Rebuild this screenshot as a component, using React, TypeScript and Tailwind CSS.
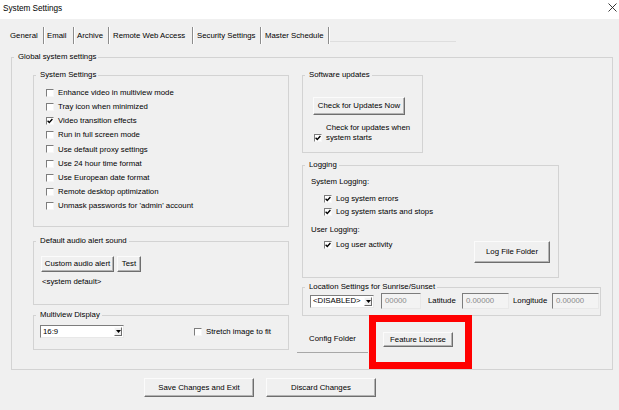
import React from "react";

const Check = ({ checked }: { checked?: boolean }) => (
  <span className="flex h-[8px] w-[8px] shrink-0 items-center justify-center border border-t-[#7d7d7d] border-l-[#7d7d7d] border-r-[#f7f7f7] border-b-[#f7f7f7] bg-white">
    {checked && (
      <svg width="6" height="6" viewBox="0 0 6 6">
        <path d="M0.6 2.7 L2.3 4.4 L5.4 1.1" fill="none" stroke="#000" strokeWidth="1.4" />
      </svg>
    )}
  </span>
);

const Group = ({
  title,
  className,
  children,
}: {
  title: string;
  className: string;
  children?: React.ReactNode;
}) => (
  <fieldset className={`border border-[#d3d3d3] ${className}`}>
    <legend className="ml-[2px] pl-[4px] pr-[2px] leading-[10px]">{title}</legend>
    {children}
  </fieldset>
);

const Btn = ({ label, className }: { label: string; className: string }) => (
  <div
    className={`flex items-center justify-center border border-t-[#fbfbfb] border-l-[#fbfbfb] border-r-[#6e6e6e] border-b-[#6e6e6e] bg-[#f0f0f0] leading-none shadow-[inset_-1px_-1px_0_#b4b4b4] ${className}`}
  >
    {label}
  </div>
);

const CheckRow = ({ label, checked, className }: { label: string; checked?: boolean; className: string }) => (
  <div className={`flex items-center ${className}`}>
    <Check checked={checked} />
    <span className="leading-none">{label}</span>
  </div>
);

const Combo = ({ value, className }: { value: string; className: string }) => (
  <div className={`flex items-center border border-t-[#7d7d7d] border-l-[#7d7d7d] border-r-[#e8e8e8] border-b-[#e8e8e8] bg-white ${className}`}>
    <span className="flex-1 pl-[2px] leading-none">{value}</span>
    <span className="mr-[1px] flex h-[9px] w-[8px] items-center justify-center border border-t-[#fbfbfb] border-l-[#fbfbfb] border-r-[#6e6e6e] border-b-[#6e6e6e] bg-[#f0f0f0]">
      <svg width="5" height="3" viewBox="0 0 5 3">
        <path d="M0 0 H5 L2.5 3 Z" fill="#000" />
      </svg>
    </span>
  </div>
);

const Field = ({ value, className }: { value: string; className: string }) => (
  <div className={`flex items-center border border-t-[#7d7d7d] border-l-[#7d7d7d] border-r-[#e8e8e8] border-b-[#e8e8e8] bg-[#f3f3f3] pl-[3px] leading-none text-[#8a8a8a] ${className}`}>
    {value}
  </div>
);

const tabs = [
  { label: "General", cls: "w-[34px] pl-0" },
  { label: "Email", cls: "w-[30px] pl-[3px]" },
  { label: "Archive", cls: "w-[35px] pl-[3px]" },
  { label: "Remote Web Access", cls: "w-[84px] pl-[4px]" },
  { label: "Security Settings", cls: "w-[68px] pl-[4px]" },
  { label: "Master Schedule", cls: "w-[68px] pl-[4px]" },
];

const sysItems: [string, boolean][] = [
  ["Enhance video in multiview mode", false],
  ["Tray icon when minimized", false],
  ["Video transition effects", true],
  ["Run in full screen mode", false],
  ["Use default proxy settings", false],
  ["Use 24 hour time format", false],
  ["Use European date format", false],
  ["Remote desktop optimization", false],
  ["Unmask passwords for 'admin' account", false],
];

export default function App() {
  return (
    <div
      className="relative h-[410px] w-[619px] overflow-hidden bg-[#f0f0f0] text-[7.8px] text-black"
      style={{ fontFamily: '"Liberation Sans", Arial, sans-serif' }}
    >
      {/* title bar */}
      <div className="flex h-[19px] items-center justify-between bg-white pl-[3px] pr-[2px]">
        <span className="text-[8.2px] leading-none">System Settings</span>
        <svg width="9" height="9" viewBox="0 0 9 9" className="mb-[4px]">
          <path d="M0.5 0.5 L8.5 8.5 M8.5 0.5 L0.5 8.5" stroke="#222" strokeWidth="0.9" />
        </svg>
      </div>

      {/* tabs */}
      <div className="mt-[8px] flex h-[17px] items-stretch pl-[10px]">
        {tabs.map((t) => (
          <div
            key={t.label}
            className={`flex items-center border-r border-r-[#8c8c8c] shadow-[1px_0_0_#ffffff] leading-none ${t.cls}`}
          >
            {t.label}
          </div>
        ))}
        <div className="ml-[1px] mb-[2px] h-px w-[126px] self-end bg-[#dedede]" />
      </div>

      {/* global group */}
      <Group title="Global system settings" className="ml-[11px] mt-[8px] h-[318px] w-[602px]">
        <div className="flex items-start">
          {/* left column */}
          <div className="ml-[21px] mt-[8px] flex w-[256px] flex-col">
            <Group title="System Settings" className="h-[157px] w-[256px]">
              <div className="mt-[6px] flex flex-col pl-[12px]">
                {sysItems.map(([l, c]) => (
                  <CheckRow key={l} label={l} checked={c} className="h-[14.1px] gap-[4px]" />
                ))}
              </div>
            </Group>

            <Group title="Default audio alert sound" className="mt-[9px] h-[69px] w-[256px]">
              <div className="mt-[10px] flex gap-[3px] pl-[7px]">
                <Btn label="Custom audio alert" className="h-[16px] w-[73px]" />
                <Btn label="Test" className="h-[16px] w-[24px]" />
              </div>
              <div className="mt-[5px] pl-[8px] leading-[10px]">&lt;system default&gt;</div>
            </Group>

            <Group title="Multiview Display" className="mt-[5px] h-[40px] w-[256px]">
              <div className="mt-[5px] flex items-center pl-[6px]">
                <Combo value="16:9" className="h-[13px] w-[84px]" />
                <CheckRow label="Stretch image to fit" className="ml-[70px] gap-[4px]" />
              </div>
            </Group>
          </div>

          {/* right column */}
          <div className="ml-[13px] mt-[8px] flex flex-col items-start">
            <Group title="Software updates" className="h-[83px] w-[121px]">
              <div className="mt-[17px] pl-[10px]">
                <Btn label="Check for Updates Now" className="h-[18px] w-[92px]" />
              </div>
              <div className="mt-[8px] flex items-start gap-[4px] pl-[11px]">
                <span className="mt-[11px]">
                  <Check checked />
                </span>
                <span className="leading-[10px]">
                  Check for updates when
                  <br />
                  system starts
                </span>
              </div>
            </Group>

            <Group title="Logging" className="mt-[7px] h-[118px] w-[257px]">
              <div className="mt-[7px] pl-[8px] leading-[10px]">System Logging:</div>
              <div className="mt-[5px] flex flex-col pl-[21px]">
                <CheckRow label="Log system errors" checked className="h-[13px] gap-[4px]" />
                <CheckRow label="Log system starts and stops" checked className="h-[13px] gap-[4px]" />
              </div>
              <div className="mt-[7px] pl-[8px] leading-[10px]">User Logging:</div>
              <div className="mt-[3px] flex items-start justify-between pl-[21px] pr-[8px]">
                <CheckRow label="Log user activity" checked className="h-[13px] gap-[4px]" />
                <Btn label="Log File Folder" className="mt-[3px] h-[22px] w-[76px]" />
              </div>
            </Group>

            <Group title="Location Settings for Sunrise/Sunset" className="mt-[4px] h-[34px] w-[299px]">
              <div className="mt-[1px] flex h-[16px] items-center pl-[7px]">
                <Combo value="<DISABLED>" className="h-[13px] w-[64px]" />
                <Field value="00000" className="ml-[7px] h-[16px] w-[40px]" />
                <span className="ml-[7px] w-[34px] leading-none">Latitude</span>
                <Field value="0.00000" className="h-[16px] w-[47px]" />
                <span className="ml-[4px] w-[39px] leading-none">Longitude</span>
                <Field value="0.00000" className="h-[16px] w-[47px]" />
              </div>
            </Group>

            <div className="ml-[-5px] mt-[12px] flex items-start">
              <div className="flex h-[25px] w-[71px] items-center justify-center border-b border-b-[#a8a8a8] pb-[3px] leading-none">
                Config Folder
              </div>
              <Btn label="Feature License" className="ml-[15px] mt-[4px] h-[15px] w-[70px]" />
            </div>
          </div>
        </div>
      </Group>

      {/* bottom buttons */}
      <div className="mt-[8px] flex items-start">
        <Btn label="Save Changes and Exit" className="ml-[144px] h-[19px] w-[110px]" />
        <Btn label="Discard Changes" className="ml-[12px] h-[19px] w-[110px]" />
      </div>

      {/* red highlight annotation */}
      <div className="absolute left-[369px] top-[315px] h-[54px] w-[103px] border-[7px] border-[#ff0000]" />
    </div>
  );
}
